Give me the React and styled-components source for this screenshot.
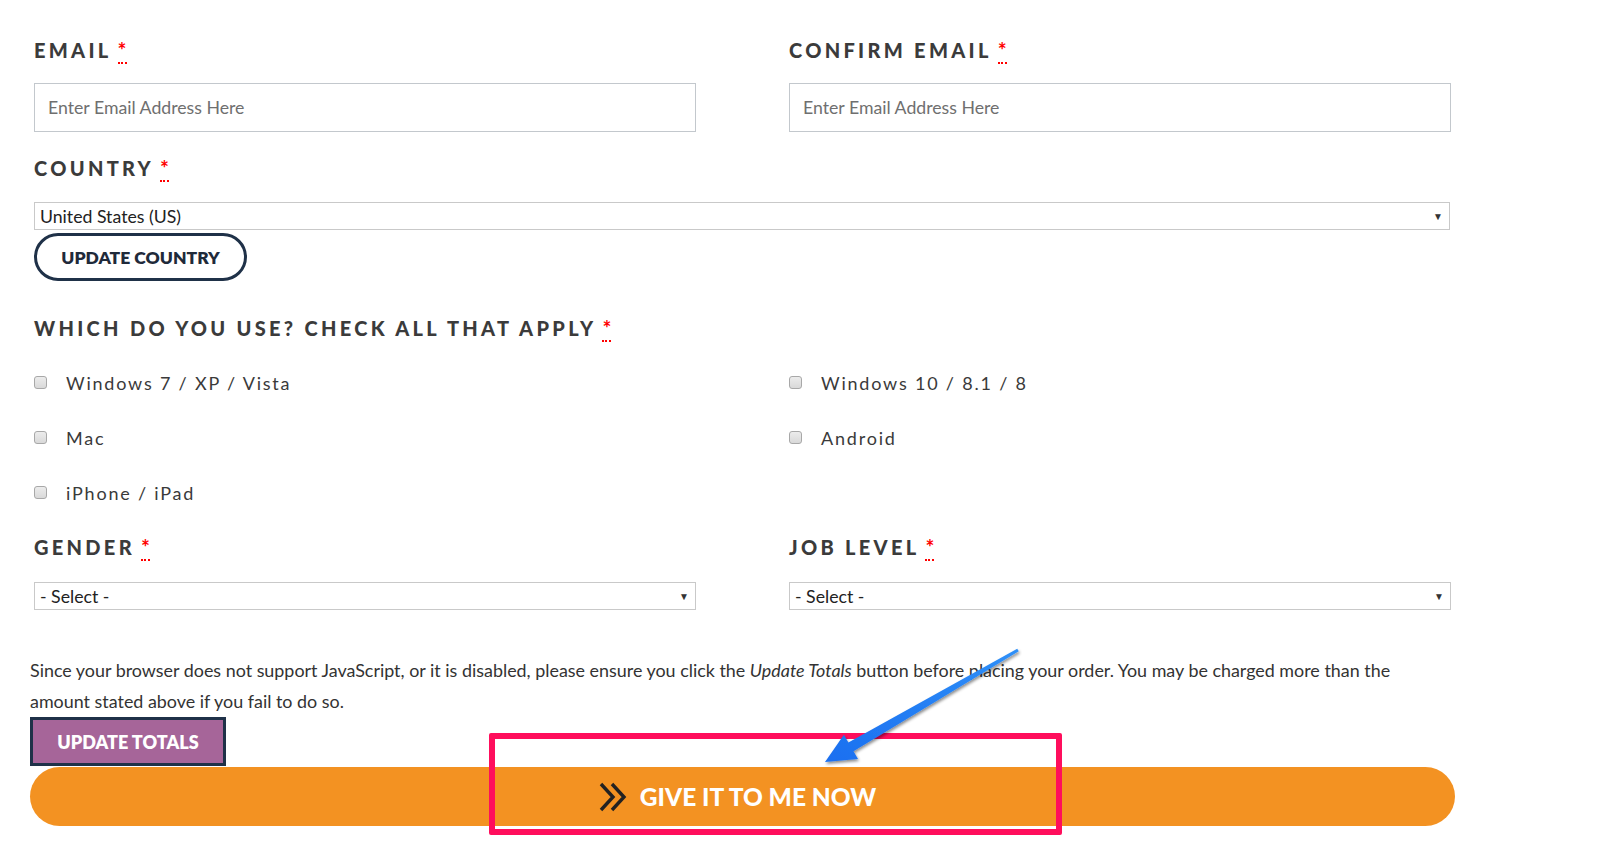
import React from 'react';
import styled, { createGlobalStyle } from 'styled-components';

const GlobalStyle = createGlobalStyle`
  body {
    margin: 0;
    background: #fff;
    font-family: Lato, "Open Sans", sans-serif;
    color: #333;
  }
  * { box-sizing: border-box; }
`;

const Page = styled.div`
  position: relative;
  width: 1623px;
  height: 842px;
  overflow: hidden;
`;

const Form = styled.form`
  width: 1450px;
  padding: 38px 0 0 34px;
  display: flex;
  flex-direction: column;
`;

const Row = styled.div`
  display: grid;
  grid-template-columns: 662px 662px;
  column-gap: 93px;
  margin-top: ${p => p.$top || 0}px;
`;

const Field = styled.div`
  display: flex;
  flex-direction: column;
  margin-top: ${p => p.$top || 0}px;
`;

const Label = styled.label`
  font-family: Lato, sans-serif;
  font-weight: 900;
  font-size: 20px;
  line-height: 24px;
  letter-spacing: 3.3px;
  text-transform: uppercase;
  color: #3b3b3b;
`;

const Req = styled.abbr`
  color: #f00;
  text-decoration: none;
  border-bottom: 2px dotted #f00;
  margin-left: 6px;
  letter-spacing: 0;
  font-size: 21px;
  font-weight: 700;
`;

const TextInput = styled.input`
  margin-top: ${p => p.$top || 21}px;
  height: 49px;
  width: 100%;
  border: 1px solid #c3c8cd;
  padding: 0 13px;
  font-family: Lato, sans-serif;
  font-size: 17.7px;
  color: #333;
  &::placeholder { color: #6f6f6f; }
`;

const SelectBox = styled.div`
  margin-top: ${p => p.$top || 22}px;
  height: 28px;
  width: 100%;
  border: 1px solid #c9c9c9;
  display: flex;
  align-items: center;
  justify-content: space-between;
  padding: 0 6px 0 5px;
  font-family: Lato, sans-serif;
  font-size: 17.7px;
  color: #222;
`;

const Caret = styled.span`
  font-size: 10px;
  color: #333;
`;

const OutlineButton = styled.button`
  margin-top: 3px;
  width: 213px;
  height: 48px;
  border: 3px solid #1f3148;
  border-radius: 24px;
  background: #fff;
  font-family: Lato, sans-serif;
  font-weight: 800;
  font-size: 17.5px;
  color: #1f2a3a;
  text-transform: uppercase;
  cursor: pointer;
`;

const CheckGrid = styled.div`
  display: grid;
  grid-template-columns: 662px 662px;
  column-gap: 93px;
  grid-auto-rows: 55px;
  margin-top: 15px;
`;

const CheckItem = styled.label`
  display: flex;
  align-items: center;
  gap: 19px;
  font-family: Lato, sans-serif;
  font-size: 18px;
  letter-spacing: 1.8px;
  color: #3a3a3a;
`;

const Check = styled.input`
  appearance: none;
  margin: 0;
  width: 13px;
  height: 13px;
  border: 1px solid #a8a8a8;
  border-radius: 3px;
  background: linear-gradient(#ececec, #d9d9d9);
`;

const Notice = styled.div`
  width: 1455px;
  padding-left: 30px;
  margin-top: 45px;
  display: flex;
  flex-direction: column;
  align-items: flex-start;
`;

const Para = styled.p`
  margin: 0;
  max-width: 1385px;
  font-family: Lato, sans-serif;
  font-size: 17.9px;
  line-height: 31px;
  color: #333;
`;

const TotalsButton = styled.button`
  width: 196px;
  height: 49px;
  background: #a66599;
  border: 3px solid #1f3148;
  color: #fff;
  font-family: Lato, sans-serif;
  font-weight: 800;
  font-size: 18px;
  text-transform: uppercase;
`;

const BuyButton = styled.button`
  margin-top: 1px;
  width: 1425px;
  height: 59px;
  border: none;
  border-radius: 30px;
  background: #f39222;
  display: flex;
  align-items: center;
  justify-content: center;
  gap: 11px;
  padding: 0 10px 0 0;
  color: #fff;
  font-family: Lato, sans-serif;
  font-weight: 900;
  font-size: 24.5px;
  text-transform: uppercase;
`;

const Highlight = styled.div`
  position: absolute;
  left: 489px;
  top: 733px;
  width: 573px;
  height: 102px;
  border: 6px solid #ff0e5c;
  border-radius: 2px;
  pointer-events: none;
`;

const ArrowSvg = styled.svg`
  position: absolute;
  left: 810px;
  top: 640px;
  overflow: visible;
  pointer-events: none;
`;

const Chevrons = () => (
  <svg width="30" height="32" viewBox="0 0 30 32">
    <path d="M2 3 L14 16 L2 29 M13 3 L25 16 L13 29" fill="none" stroke="#222" strokeWidth="3.4" strokeLinejoin="miter" />
  </svg>
);

const Required = () => <Req title="required">*</Req>;

function App() {
  return (
    <Page>
      <GlobalStyle />
      <Form onSubmit={e => e.preventDefault()}>
        <Row>
          <Field>
            <Label>Email<Required /></Label>
            <TextInput placeholder="Enter Email Address Here" />
          </Field>
          <Field>
            <Label>Confirm Email<Required /></Label>
            <TextInput placeholder="Enter Email Address Here" />
          </Field>
        </Row>

        <Field $top={24}>
          <Label>Country<Required /></Label>
          <SelectBox>
            <span>United States (US)</span>
            <Caret>▼</Caret>
          </SelectBox>
        </Field>
        <OutlineButton type="button">Update Country</OutlineButton>

        <Field $top={35}>
          <Label>Which do you use? Check all that apply<Required /></Label>
        </Field>
        <CheckGrid>
          <CheckItem><Check type="checkbox" />Windows 7 / XP / Vista</CheckItem>
          <CheckItem><Check type="checkbox" />Windows 10 / 8.1 / 8</CheckItem>
          <CheckItem><Check type="checkbox" />Mac</CheckItem>
          <CheckItem><Check type="checkbox" />Android</CheckItem>
          <CheckItem><Check type="checkbox" />iPhone / iPad</CheckItem>
        </CheckGrid>

        <Row $top={15}>
          <Field>
            <Label>Gender<Required /></Label>
            <SelectBox $top={23}>
              <span>- Select -</span>
              <Caret>▼</Caret>
            </SelectBox>
          </Field>
          <Field>
            <Label>Job Level<Required /></Label>
            <SelectBox $top={23}>
              <span>- Select -</span>
              <Caret>▼</Caret>
            </SelectBox>
          </Field>
        </Row>
      </Form>

      <Notice>
        <Para>
          Since your browser does not support JavaScript, or it is disabled, please ensure you click the <em>Update Totals</em> button before placing your order. You may be charged more than the amount stated above if you fail to do so.
        </Para>
        <TotalsButton type="button">Update Totals</TotalsButton>
        <BuyButton type="button">
          <Chevrons />
          Give it to me now
        </BuyButton>
      </Notice>

      <Highlight />
      <ArrowSvg width="220" height="135" viewBox="0 0 220 135">
        <defs>
          <linearGradient id="arrowFill" x1="0" y1="1" x2="1" y2="0">
            <stop offset="0" stopColor="#1a6ff0" />
            <stop offset="1" stopColor="#2f90f8" />
          </linearGradient>
          <filter id="arrowShadow" x="-20%" y="-20%" width="140%" height="140%">
            <feDropShadow dx="1" dy="2" stdDeviation="1.5" floodColor="#000" floodOpacity="0.45" />
          </filter>
        </defs>
        <polygon
          points="15,122 48,119 43.5,111.3 208.8,11.3 207.2,8.7 38.4,102.6 33.9,94.8"
          fill="url(#arrowFill)"
          filter="url(#arrowShadow)"
        />
      </ArrowSvg>
    </Page>
  );
}

export default App;
